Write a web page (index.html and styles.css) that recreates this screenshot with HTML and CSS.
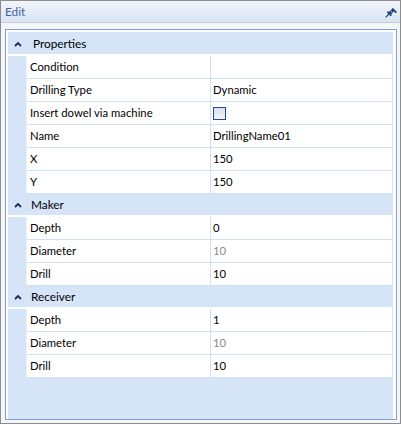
FILE: index.html
```
<!DOCTYPE html>
<html>
<head>
<meta charset="utf-8">
<link rel="stylesheet" href="styles.css">
</head>
<body>
<div class="window">
  <div class="titlebar">
    <span class="title">Edit</span>
    <svg class="pin" width="12" height="10" viewBox="0 0 12 10">
      <path d="M0.6 9.4 L4 6" stroke="#1d3f7a" stroke-width="1.2" fill="none"/>
      <path d="M2.4 3.6 L6.4 7.6" stroke="#1d3f7a" stroke-width="1.6" fill="none"/>
      <path d="M4.6 5.4 L8.4 1.8" stroke="#1d3f7a" stroke-width="3" fill="none"/>
      <path d="M7.2 0.4 L11.4 4.6" stroke="#1d3f7a" stroke-width="1.6" fill="none"/>
      <circle cx="6.6" cy="3.6" r="0.8" fill="#9fb6dc"/>
    </svg>
  </div>
  <div class="panel">
    <div class="grid">
      <div class="cat">
        <svg class="chev" width="8" height="6" viewBox="0 0 8 6"><polyline points="1,5 4,2 7,5" fill="none" stroke="#1b2f52" stroke-width="1.8"/></svg>
        <span class="cat-name cat-first">Properties</span>
      </div>
      <div class="row"><div class="gut"></div><div class="lbl">Condition</div><div class="val"></div></div>
      <div class="row"><div class="gut"></div><div class="lbl">Drilling Type</div><div class="val">Dynamic</div></div>
      <div class="row"><div class="gut"></div><div class="lbl">Insert dowel via machine</div><div class="val"><span class="check"></span></div></div>
      <div class="row"><div class="gut"></div><div class="lbl">Name</div><div class="val">DrillingName01</div></div>
      <div class="row"><div class="gut"></div><div class="lbl">X</div><div class="val">150</div></div>
      <div class="row"><div class="gut"></div><div class="lbl">Y</div><div class="val">150</div></div>
      <div class="cat">
        <svg class="chev" width="8" height="6" viewBox="0 0 8 6"><polyline points="1,5 4,2 7,5" fill="none" stroke="#1b2f52" stroke-width="1.8"/></svg>
        <span class="cat-name">Maker</span>
      </div>
      <div class="row"><div class="gut"></div><div class="lbl">Depth</div><div class="val">0</div></div>
      <div class="row"><div class="gut"></div><div class="lbl">Diameter</div><div class="val ro">10</div></div>
      <div class="row"><div class="gut"></div><div class="lbl">Drill</div><div class="val">10</div></div>
      <div class="cat">
        <svg class="chev" width="8" height="6" viewBox="0 0 8 6"><polyline points="1,5 4,2 7,5" fill="none" stroke="#1b2f52" stroke-width="1.8"/></svg>
        <span class="cat-name">Receiver</span>
      </div>
      <div class="row"><div class="gut"></div><div class="lbl">Depth</div><div class="val">1</div></div>
      <div class="row"><div class="gut"></div><div class="lbl">Diameter</div><div class="val ro">10</div></div>
      <div class="row"><div class="gut"></div><div class="lbl">Drill</div><div class="val">10</div></div>
    </div>
  </div>
</div>
</body>
</html>
```
FILE: styles.css
```
body {
  margin: 0;
  background: #ffffff;
  font-family: Lato, "Noto Sans", sans-serif;
  font-size: 11.3px;
  color: #000;
}
.window {
  width: 401px;
  height: 424px;
  box-sizing: border-box;
  border: 1px solid #8d8d8d;
  background: #f6f6f6;
  display: flex;
  flex-direction: column;
}
.titlebar {
  height: 22px;
  box-sizing: border-box;
  border-bottom: 1px solid #c3cbd6;
  background: linear-gradient(#f3f6fb, #d9e4f3);
  display: flex;
  align-items: center;
  justify-content: space-between;
  padding: 0 3px 0 4px;
  flex: none;
}
.title {
  color: #3f62a4;
  font-size: 11.8px;
}
.pin {
  display: block;
  margin-top: 2px;
}
.panel {
  flex: 1;
  margin: 6px 3px 3px 4px;
  border: 1px solid #7ba2d8;
  background: #ffffff;
  padding: 2px 3px 0 2px;
  display: flex;
}
.grid {
  flex: 1;
  background: #d5e4f7;
  padding: 1px 1px 0 0;
}
.cat {
  height: 23px;
  box-sizing: border-box;
  border-bottom: 2px solid #ffffff;
  display: flex;
  align-items: center;
  font-size: 11.8px;
}
.chev {
  display: block;
  margin-left: 6px;
  flex: none;
}
.cat-name {
  margin-left: 9px;
}
.cat-first {
  margin-left: 11px;
}
.row {
  display: flex;
  height: 23px;
}
.gut {
  width: 18px;
  flex: none;
}
.lbl {
  width: 185px;
  flex: none;
  box-sizing: border-box;
  background: #ffffff;
  border-left: 1px solid #edf3fb;
  border-right: 1px solid #d0e0f5;
  border-bottom: 1px solid #d0e0f5;
  padding-left: 3px;
  line-height: 22px;
  white-space: nowrap;
}
.val {
  flex: 1;
  box-sizing: border-box;
  background: #ffffff;
  border-bottom: 1px solid #d0e0f5;
  padding-left: 2px;
  line-height: 22px;
  display: flex;
  align-items: center;
}
.ro {
  color: #8a8a8a;
}
.check {
  display: block;
  width: 13px;
  height: 13px;
  box-sizing: border-box;
  border: 1px solid #1f4e8c;
  background: linear-gradient(#dbe1ea, #f3f5f8);
}
```
